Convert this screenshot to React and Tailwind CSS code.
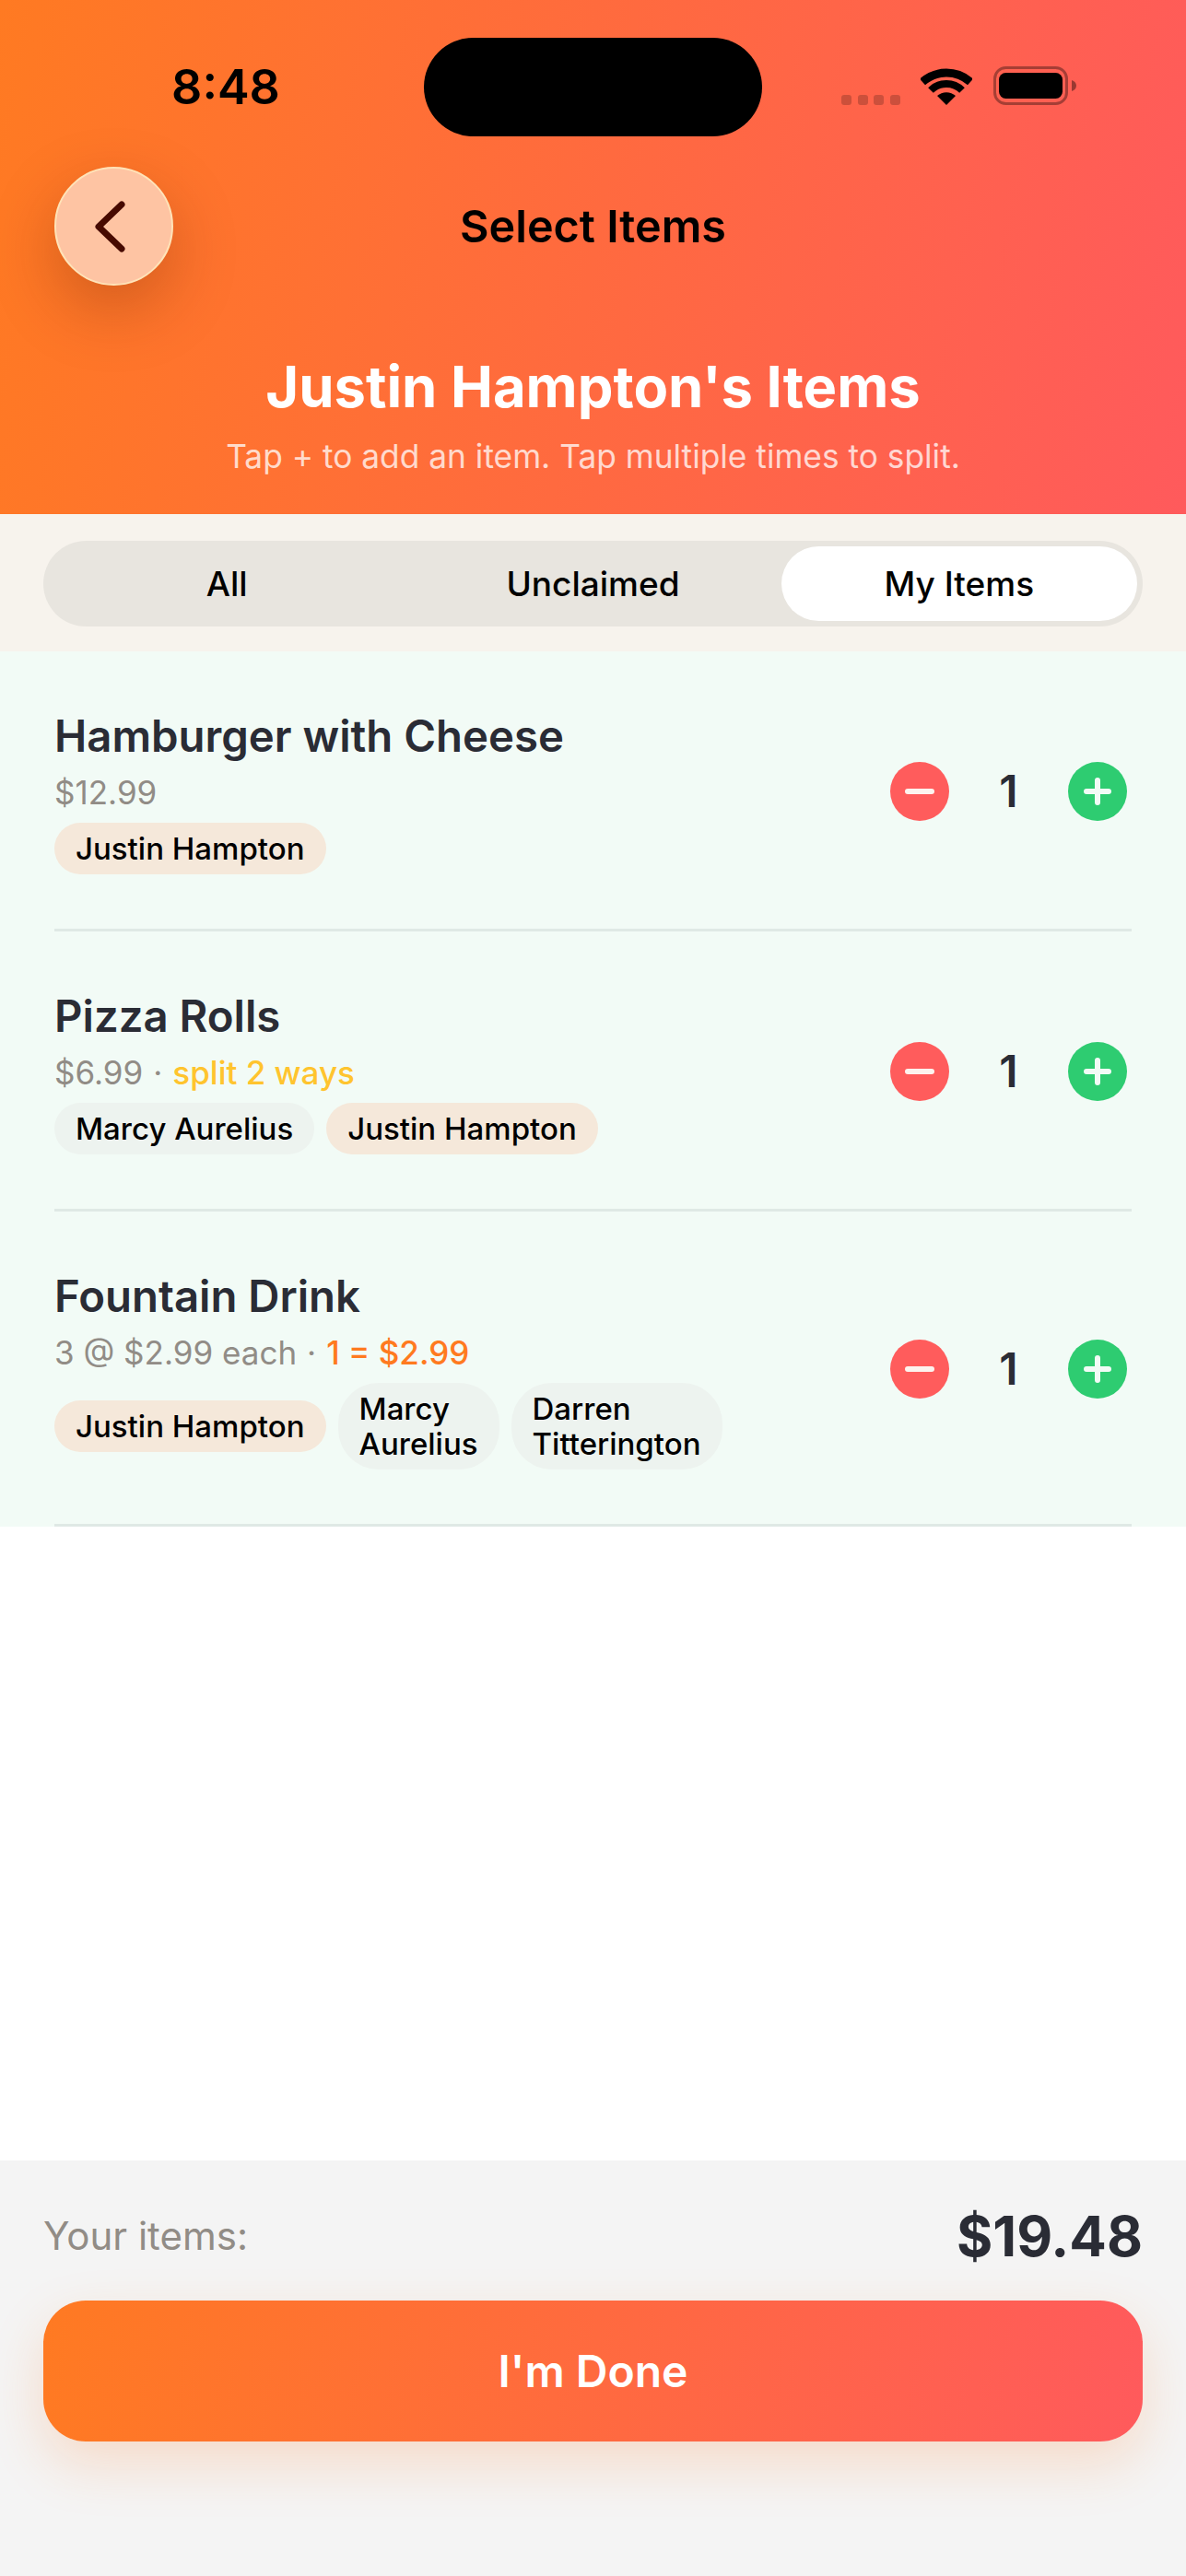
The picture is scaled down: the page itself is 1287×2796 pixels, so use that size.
const items = [
  {
    name: "Hamburger with Cheese",
    price: "$12.99",
    chips: [{ label: ["Justin Hampton"], me: true }],
  },
  {
    name: "Pizza Rolls",
    price: "$6.99",
    note: "split 2 ways",
    noteColor: "text-[#ffc42e]",
    chips: [{ label: ["Marcy Aurelius"] }, { label: ["Justin Hampton"], me: true }],
  },
  {
    name: "Fountain Drink",
    price: "3 @ $2.99 each",
    note: "1 = $2.99",
    noteColor: "text-[#ff7a1f]",
    chips: [
      { label: ["Justin Hampton"], me: true },
      { label: ["Marcy", "Aurelius"] },
      { label: ["Darren", "Titterington"] },
    ],
  },
];

const StatusIcons = () => (
  <div className="flex items-end pl-[86px] pb-[34px] h-full">
    <div className="flex gap-[6.5px]">
      <span className="w-[11px] h-[11px] rounded-[3px] bg-black/20" />
      <span className="w-[11px] h-[11px] rounded-[3px] bg-black/20" />
      <span className="w-[11px] h-[11px] rounded-[3px] bg-black/20" />
      <span className="w-[11px] h-[11px] rounded-[3px] bg-black/20" />
    </div>
    <svg width="56" height="41" viewBox="0 0 56 41" className="ml-[22px]">
      <path d="M2 16 A39 39 0 0 1 54 16" fill="none" stroke="#000" strokeWidth="9" />
      <path d="M11 25 A24 24 0 0 1 45 25" fill="none" stroke="#000" strokeWidth="8" />
      <path d="M28 41 L18 31 A15 15 0 0 1 38 31 Z" fill="#000" />
    </svg>
    <svg width="90" height="42" viewBox="0 0 90 42" className="ml-[23px]">
      <rect x="1.5" y="1.5" width="78" height="39" rx="12" fill="none" stroke="#000" strokeOpacity="0.35" strokeWidth="3" />
      <rect x="6" y="7" width="69" height="28" rx="7.5" fill="#000" />
      <path d="M85 15 C88 16 90 18 90 21 C90 24 88 26 85 27 Z" fill="#000" fillOpacity="0.4" />
    </svg>
  </div>
);

const Stepper = () => (
  <div className="flex items-center shrink-0">
    <button className="w-16 h-16 rounded-full bg-[#ff5c5c] flex items-center justify-center">
      <svg width="32" height="6" viewBox="0 0 32 6">
        <path d="M3 3 H29" stroke="#fdf3ee" strokeWidth="6" strokeLinecap="round" />
      </svg>
    </button>
    <span className="w-[129px] text-center text-[48px] leading-[64px] font-semibold text-[#2a2c35]">1</span>
    <button className="w-16 h-16 rounded-full bg-[#2ecc71] flex items-center justify-center">
      <svg width="30" height="30" viewBox="0 0 30 30">
        <path d="M3 15 H27 M15 3 V27" stroke="#f2fbf6" strokeWidth="6" strokeLinecap="round" />
      </svg>
    </button>
  </div>
);

const Row = ({ item }) => (
  <div className="flex items-center justify-between border-b-[3px] border-[#dfe9e5] pt-[62px] pb-[59px]">
    <div>
      <div className="text-[47.3px] leading-[60px] font-semibold text-[#2a2c35]">{item.name}</div>
      <div className="text-[35px] leading-[46px] mt-[8px] text-[#918c86]">
        {item.price}
        {item.note && (
          <span>
            <span className="mx-[11px]">·</span>
            <span className={`font-medium ${item.noteColor}`}>{item.note}</span>
          </span>
        )}
      </div>
      <div className="flex items-center gap-[13px] mt-[10px]">
        {item.chips.map((chip, i) => (
          <span
            key={i}
            className={`whitespace-nowrap rounded-[44px] px-[23px] py-[9px] text-[33px] leading-[38px] font-medium text-black ${
              chip.me ? "bg-[#f5e8da]" : "bg-[#edf3ef]"
            }`}
          >
            {chip.label.map((line) => (
              <div key={line}>{line}</div>
            ))}
          </span>
        ))}
      </div>
    </div>
    <div className="pr-[5px]">
      <Stepper />
    </div>
  </div>
);

export default function App() {
  return (
    <div className="w-[1287px] h-[2796px] flex flex-col bg-white font-['Inter',sans-serif]">
      {/* Header */}
      <div className="h-[558px] shrink-0 bg-[linear-gradient(100deg,#ff7a22,#ff5a5c)]">
        <div className="flex h-[148px] pt-[41px]">
          <div className="w-[460px] pl-[30px] flex items-center justify-center text-[52px] font-semibold text-black">
            8:48
          </div>
          <div className="w-[367px] h-[107px] rounded-[54px] bg-black" />
          <StatusIcons />
        </div>
        <div className="grid grid-cols-[128px_1fr_128px] items-center px-[59px] mt-[33px]">
          <button className="w-[129px] h-[129px] rounded-full bg-[#fec4a3] border-2 border-[#ffe3b8] flex items-center justify-center shadow-[0_26px_70px_rgba(90,30,0,0.28)]">
            <svg width="44" height="60" viewBox="0 0 44 60" className="mr-[8px]">
              <path d="M34 6 L9 30 L34 54" fill="none" stroke="#470a00" strokeWidth="7" strokeLinecap="round" strokeLinejoin="round" />
            </svg>
          </button>
          <div className="text-center text-[48.5px] leading-[60px] font-semibold text-black pt-[1px]">Select Items</div>
        </div>
        <div className="text-center text-[61.5px] leading-[80px] font-bold text-white mt-[70px]">Justin Hampton's Items</div>
        <div className="text-center text-[35.3px] leading-[46px] text-white/75 mt-[13px]">
          Tap + to add an item. Tap multiple times to split.
        </div>
      </div>

      {/* Tabs */}
      <div className="h-[149px] shrink-0 bg-[#f7f3ed] px-[47px] pt-[29px]">
        <div className="h-[93px] rounded-[47px] bg-[#e8e5df] p-[6px] flex gap-[11px]">
          <div className="flex-1 flex items-center justify-center text-[37px] font-medium text-black">All</div>
          <div className="flex-1 flex items-center justify-center text-[37px] font-medium text-black">Unclaimed</div>
          <div className="flex-1 flex items-center justify-center text-[37px] font-medium text-black bg-white rounded-[41px]">My Items</div>
        </div>
      </div>

      {/* Items */}
      <div className="shrink-0 bg-[#f2fbf6] px-[59px]">
        {items.map((item) => (
          <Row key={item.name} item={item} />
        ))}
      </div>

      <div className="flex-1" />

      {/* Footer */}
      <div className="h-[451px] shrink-0 bg-[#f4f4f4] px-[47px] pt-[52px]">
        <div className="flex items-center justify-between h-[60px]">
          <span className="text-[42px] text-[#918c86] -mt-[2px]">Your items:</span>
          <span className="text-[60px] font-bold text-[#2a2c35]">$19.48</span>
        </div>
        <button className="w-full h-[153px] mt-[40px] rounded-[46px] bg-[linear-gradient(97deg,#ff7a22,#ff5a5c)] text-white text-[48px] font-semibold shadow-[0_24px_60px_rgba(255,122,31,0.2)]">
          I'm Done
        </button>
      </div>
    </div>
  );
}
